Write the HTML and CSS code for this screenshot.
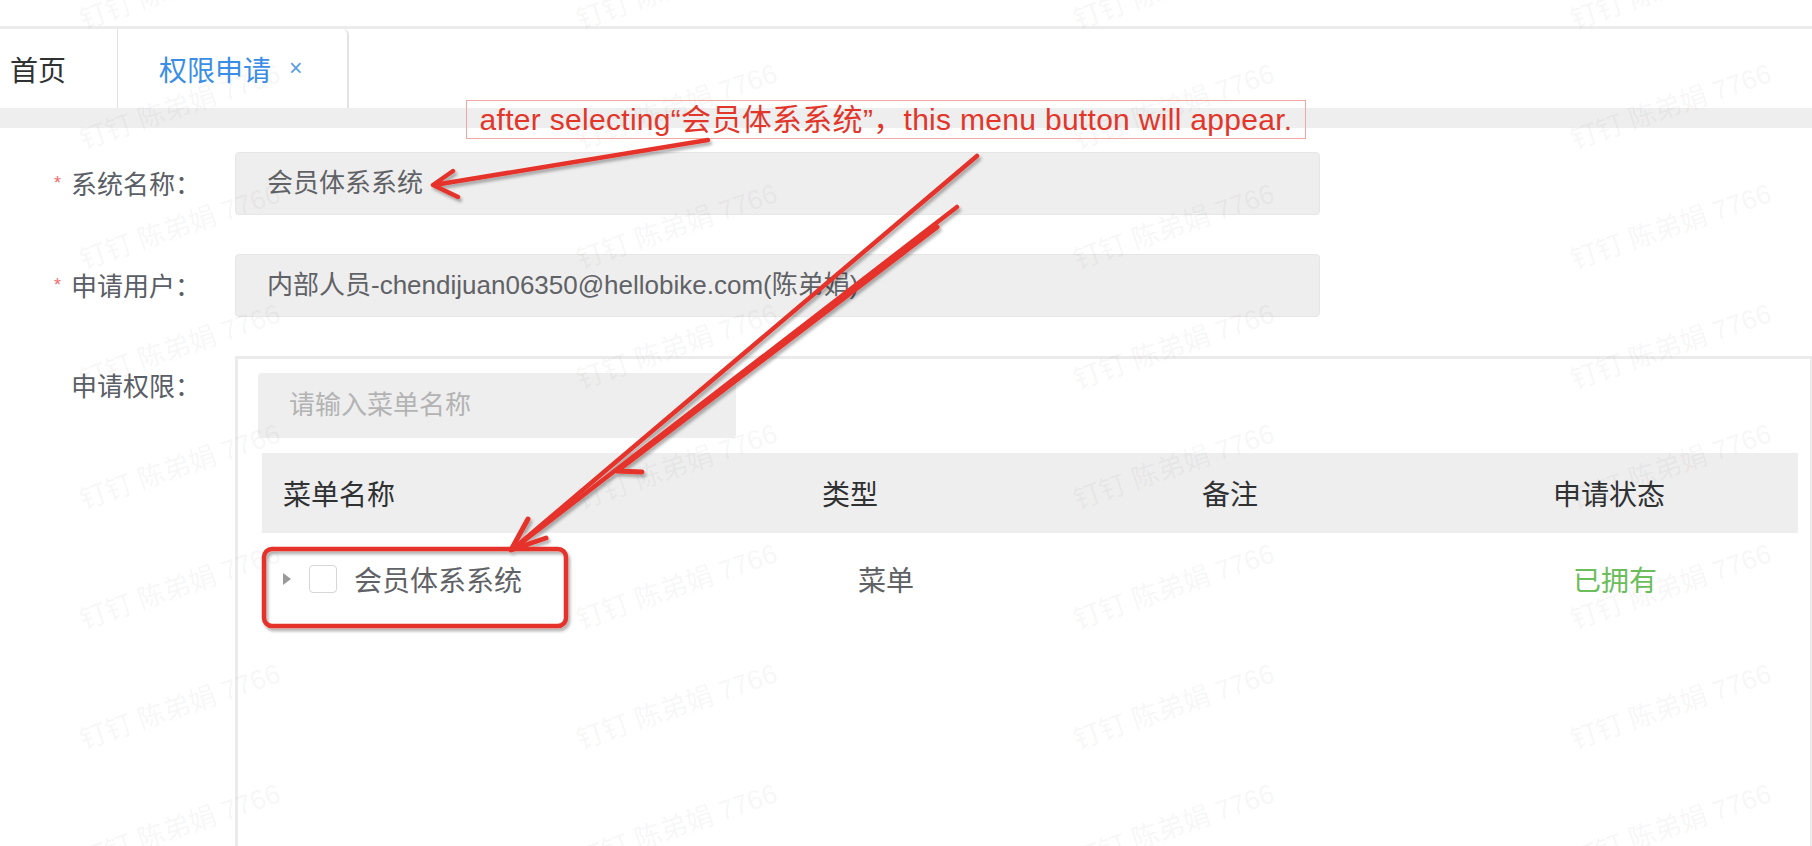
FILE: index.html
```html
<!DOCTYPE html>
<html lang="zh-CN">
<head>
  <meta charset="UTF-8">
  <meta name="viewport" content="width=device-width, initial-scale=1.0">
  <title>权限申请</title>
  <link rel="stylesheet" href="styles.css">
</head>
<body>
  <div class="page">
    <div class="top-gap"></div>
    <div class="tabs">
      <div class="tab tab-home">首页</div>
      <div class="tab tab-active">权限申请<span class="close">×</span></div>
    </div>
    <div class="band"></div>

    <div class="form">
      <div class="row">
        <div class="label required">系统名称：</div>
        <div class="input">会员体系系统</div>
      </div>
      <div class="row">
        <div class="label required">申请用户：</div>
        <div class="input">内部人员-chendijuan06350@hellobike.com(陈弟娟)</div>
      </div>
      <div class="row">
        <div class="label">申请权限：</div>
        <div class="panel">
          <div class="search">请输入菜单名称</div>
          <div class="table">
            <div class="thead">
              <div class="th th-name">菜单名称</div>
              <div class="th">类型</div>
              <div class="th">备注</div>
              <div class="th">申请状态</div>
            </div>
            <div class="trow">
              <div class="td td-name">
                <span class="caret"></span>
                <span class="checkbox"></span>
                <span class="node-label">会员体系系统</span>
              </div>
              <div class="td">菜单</div>
              <div class="td"></div>
              <div class="td status-ok">已拥有</div>
            </div>
          </div>
        </div>
      </div>
    </div>

    <div class="watermark">
      <div class="wm"><span>钉钉 陈弟娟 7766</span></div>
      <div class="wm"><span>钉钉 陈弟娟 7766</span></div>
      <div class="wm"><span>钉钉 陈弟娟 7766</span></div>
      <div class="wm"><span>钉钉 陈弟娟 7766</span></div>
      <div class="wm"><span>钉钉 陈弟娟 7766</span></div>
      <div class="wm"><span>钉钉 陈弟娟 7766</span></div>
      <div class="wm"><span>钉钉 陈弟娟 7766</span></div>
      <div class="wm"><span>钉钉 陈弟娟 7766</span></div>
      <div class="wm"><span>钉钉 陈弟娟 7766</span></div>
      <div class="wm"><span>钉钉 陈弟娟 7766</span></div>
      <div class="wm"><span>钉钉 陈弟娟 7766</span></div>
      <div class="wm"><span>钉钉 陈弟娟 7766</span></div>
      <div class="wm"><span>钉钉 陈弟娟 7766</span></div>
      <div class="wm"><span>钉钉 陈弟娟 7766</span></div>
      <div class="wm"><span>钉钉 陈弟娟 7766</span></div>
      <div class="wm"><span>钉钉 陈弟娟 7766</span></div>
      <div class="wm"><span>钉钉 陈弟娟 7766</span></div>
      <div class="wm"><span>钉钉 陈弟娟 7766</span></div>
      <div class="wm"><span>钉钉 陈弟娟 7766</span></div>
      <div class="wm"><span>钉钉 陈弟娟 7766</span></div>
      <div class="wm"><span>钉钉 陈弟娟 7766</span></div>
      <div class="wm"><span>钉钉 陈弟娟 7766</span></div>
      <div class="wm"><span>钉钉 陈弟娟 7766</span></div>
      <div class="wm"><span>钉钉 陈弟娟 7766</span></div>
      <div class="wm"><span>钉钉 陈弟娟 7766</span></div>
      <div class="wm"><span>钉钉 陈弟娟 7766</span></div>
      <div class="wm"><span>钉钉 陈弟娟 7766</span></div>
      <div class="wm"><span>钉钉 陈弟娟 7766</span></div>
      <div class="wm"><span>钉钉 陈弟娟 7766</span></div>
      <div class="wm"><span>钉钉 陈弟娟 7766</span></div>
      <div class="wm"><span>钉钉 陈弟娟 7766</span></div>
      <div class="wm"><span>钉钉 陈弟娟 7766</span></div>
    </div>

    <!-- annotation drawn over the screenshot -->
    <div class="note">after selecting“会员体系系统”，this menu button will appear.</div>
    <svg class="marks" width="1812" height="846" viewBox="0 0 1812 846">
      <defs>
        <filter id="shadow" x="-10%" y="-10%" width="130%" height="130%">
          <feDropShadow dx="2" dy="3" stdDeviation="1.5" flood-color="#000" flood-opacity="0.3"/>
        </filter>
      </defs>
      <g fill="none" stroke="#e5332a" stroke-width="4.5" stroke-linecap="round" stroke-linejoin="round" filter="url(#shadow)">
        <path d="M708 140 L434 185 M453 171 L433 185 L458 197"/>
        <path d="M977 156 L513 549"/>
        <path d="M957 207 L516 547"/>
        <path d="M937 227 L617 471 L642 472" stroke-width="5"/>
        <path d="M528 519 L511 550 L546 538" stroke-width="5"/>
        <rect x="264" y="549" width="302" height="77" rx="8"/>
      </g>
    </svg>
  </div>
</body>
</html>
```

FILE: styles.css
```css
* {
  box-sizing: border-box;
}

html,
body {
  margin: 0;
}

body {
  font-family: "Liberation Sans", "Noto Sans CJK SC", sans-serif;
  color: #606266;
  background: #fff;
}

.page {
  position: relative;
  width: 1812px;
  height: 846px;
  overflow: hidden;
}

.top-gap {
  height: 26px;
}

/* tabs */
.tabs {
  display: flex;
  height: 82px;
  border-top: 3px solid #ececec;
}

.tab {
  display: flex;
  align-items: center;
  font-size: 28px;
  color: #303133;
}

.tab-home {
  width: 118px;
  padding-left: 10px;
  border-right: 1px solid #e2e2e2;
}

.tab-active {
  width: 231px;
  padding-left: 41px;
  color: #3a8ee6;
  border-right: 2px solid #e2e2e2;
  border-top-right-radius: 6px;
}

.close {
  font-size: 23px;
  margin-left: 18px;
  color: #5a9de6;
}

.band {
  height: 20px;
  background: #eeeeee;
}

/* form */
.form {
  padding-top: 24px;
}

.row {
  display: flex;
  align-items: flex-start;
  margin-bottom: 39px;
}

.label {
  flex: none;
  width: 235px;
  height: 63px;
  line-height: 63px;
  padding-right: 34px;
  text-align: right;
  font-size: 26px;
  color: #5a5e66;
}

.required::before {
  content: "*";
  color: #f56c6c;
  font-size: 18px;
  margin-right: 10px;
  vertical-align: 5px;
}

.input {
  width: 1085px;
  height: 63px;
  line-height: 61px;
  padding-left: 31px;
  font-size: 26px;
  color: #606266;
  background: #eeeeee;
  border: 1px solid #e6e6e6;
  border-radius: 4px;
  white-space: nowrap;
}

/* permission panel */
.panel {
  flex: 1;
  height: 500px;
  border: 3px solid #ebebeb;
  border-right-width: 2px;
  border-bottom: 0;
  padding: 14px 12px 0 20px;
}

.search {
  width: 478px;
  height: 65px;
  line-height: 65px;
  padding-left: 31px;
  font-size: 26px;
  color: #b3b3b3;
  background: #eeeeee;
  border-radius: 4px;
}

.table {
  margin: 15px 0 0 4px;
  font-size: 28px;
}

.thead {
  display: grid;
  grid-template-columns: 398px 380px 380px 1fr;
  align-items: center;
  height: 80px;
  background: #eeeeee;
  color: #303133;
}

.th,
.td {
  text-align: center;
}

.th-name {
  text-align: left;
  padding-left: 21px;
}

.trow {
  display: grid;
  grid-template-columns: 442px 364px 364px 1fr;
  align-items: center;
  height: 92px;
  color: #606266;
}

.td-name {
  display: flex;
  align-items: center;
  padding-left: 21px;
  text-align: left;
}

.caret {
  width: 0;
  height: 0;
  border-left: 8px solid #9a9a9a;
  border-top: 6px solid transparent;
  border-bottom: 6px solid transparent;
}

.checkbox {
  width: 28px;
  height: 28px;
  margin-left: 18px;
  border: 1px solid #d6d6d6;
  border-radius: 4px;
  background: #fff;
}

.node-label {
  margin-left: 17px;
}

.status-ok {
  color: #6cbd5c;
}

/* watermark layer */
.watermark {
  position: absolute;
  left: -69px;
  top: -76px;
  display: grid;
  grid-template-columns: repeat(4, 497px);
  grid-auto-rows: 120px;
  pointer-events: none;
}

.wm {
  display: flex;
  align-items: center;
  justify-content: center;
}

.wm span {
  font-size: 27px;
  color: rgba(0, 0, 0, 0.055);
  white-space: pre;
  transform: rotate(-19deg);
}

/* annotation overlay */
.note {
  position: absolute;
  left: 466px;
  top: 100px;
  width: 840px;
  height: 39px;
  line-height: 37px;
  text-align: center;
  white-space: nowrap;
  font-size: 30px;
  letter-spacing: 0.3px;
  color: #e2362b;
  border: 1px solid #f2a7a7;
}

.marks {
  position: absolute;
  left: 0;
  top: 0;
  pointer-events: none;
}
```
